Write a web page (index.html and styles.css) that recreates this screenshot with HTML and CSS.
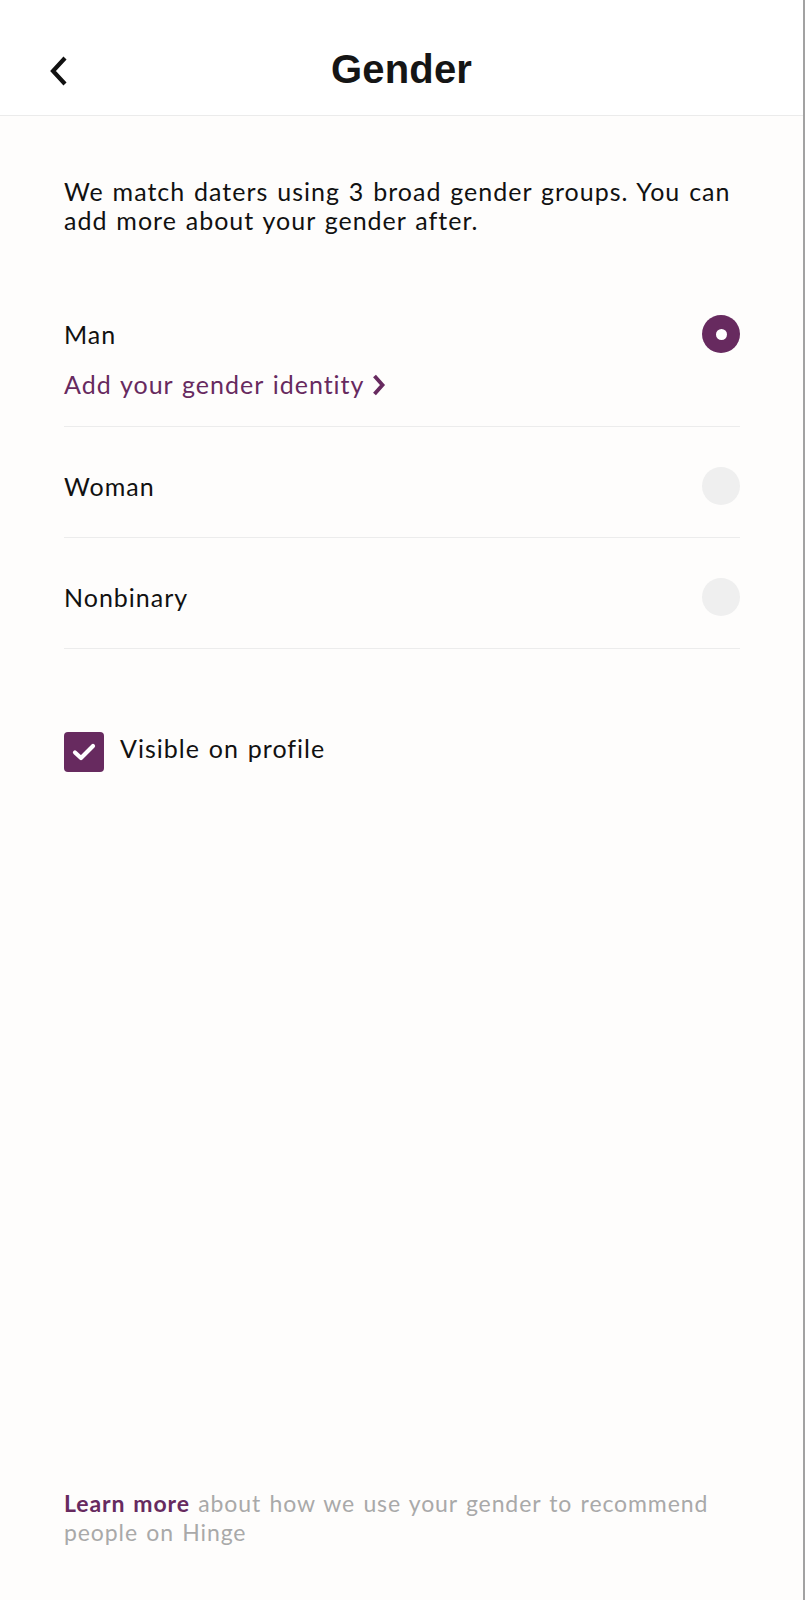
FILE: index.html
```html
<!DOCTYPE html>
<html lang="en">
<head>
<meta charset="utf-8">
<title>Gender</title>
<link rel="stylesheet" href="styles.css">
</head>
<body>
<div class="page">
  <header class="topbar">
    <button class="back" aria-label="Back">
      <svg width="20" height="30" viewBox="0 0 20 30"><polyline points="16,2 4,15 16,28" fill="none" stroke="#111" stroke-width="4.2" stroke-linejoin="miter" stroke-linecap="butt"/></svg>
    </button>
    <h1 class="title">Gender</h1>
  </header>
  <main class="content">
    <p class="intro">We match daters using 3 broad gender groups. You can add more about your gender after.</p>
    <ul class="options">
      <li class="option option-first">
        <div class="option-line">
          <span class="option-label">Man</span>
          <span class="radio radio-on"></span>
        </div>
        <a class="identity-link" href="#"><span>Add your gender identity</span>
          <svg class="link-chev" width="14" height="24" viewBox="0 0 14 24"><polyline points="2.5,3 10.5,12 2.5,21" fill="none" stroke="#672a5f" stroke-width="3.8"/></svg>
        </a>
      </li>
      <li class="option">
        <div class="option-line">
          <span class="option-label">Woman</span>
          <span class="radio"></span>
        </div>
      </li>
      <li class="option">
        <div class="option-line">
          <span class="option-label">Nonbinary</span>
          <span class="radio"></span>
        </div>
      </li>
    </ul>
    <label class="visible">
      <span class="checkbox">
        <svg width="26" height="22" viewBox="0 0 26 22"><polyline points="4,11.5 10,17 22,5" fill="none" stroke="#fff" stroke-width="4.2" stroke-linecap="round" stroke-linejoin="round"/></svg>
      </span>
      <span class="visible-label">Visible on profile</span>
    </label>
  </main>
  <footer class="footnote">
    <p class="footnote-text"><span class="learn">Learn more</span> about how we use your gender to recommend people on Hinge</p>
  </footer>
</div>
</body>
</html>
```

FILE: styles.css
```css
* { box-sizing: border-box; }
html, body { margin: 0; padding: 0; }
body {
  background: #fefdfc;
  font-family: "Lato", "Liberation Sans", sans-serif;
  color: #111;
}
.page {
  width: 805px;
  height: 1600px;
  border-right: 2px solid #a2a2a2;
  display: flex;
  flex-direction: column;
}
.topbar {
  height: 116px;
  background: #ffffff;
  border-bottom: 1px solid #ebebeb;
  display: flex;
  align-items: center;
  justify-content: center;
  position: relative;
  flex-shrink: 0;
}
.back {
  position: absolute;
  left: 49px;
  top: 56px;
  padding: 0;
  border: 0;
  background: none;
  width: 20px;
  height: 30px;
}
.back svg { display: block; }
.title {
  margin: 24px 0 0;
  font-family: "Liberation Sans", Arial, sans-serif;
  font-weight: 700;
  font-size: 40px;
  letter-spacing: 0.2px;
  color: #151515;
}
.content {
  padding: 61px 63px 0 64px;
  font-size: 25px;
  letter-spacing: 1px;
  word-spacing: 1.5px;
}
.intro {
  margin: 0;
  line-height: 29px;
  color: #111;
}
.options {
  list-style: none;
  margin: 40px 0 0;
  padding: 0;
}
.option {
  border-bottom: 1px solid #ececec;
  padding: 40px 0 32px;
}
.option-first {
  padding-bottom: 27px;
}
.option-line {
  display: flex;
  align-items: center;
  justify-content: space-between;
  height: 38px;
}
.option-label {
  line-height: 29px;
}
.radio {
  width: 38px;
  height: 38px;
  border-radius: 50%;
  background: #efefef;
  flex-shrink: 0;
}
.radio-on {
  background: #672a5f;
  display: flex;
  align-items: center;
  justify-content: center;
}
.radio-on::after {
  content: "";
  width: 11px;
  height: 11px;
  border-radius: 50%;
  background: #fff;
}
.identity-link {
  display: flex;
  align-items: center;
  gap: 8px;
  margin-top: 17px;
  line-height: 29px;
  color: #672a5f;
  text-decoration: none;
}
.link-chev { display: block; }
.visible {
  display: flex;
  align-items: center;
  gap: 16px;
  margin-top: 83px;
}
.checkbox {
  width: 40px;
  height: 40px;
  border-radius: 4px;
  background: #672a5f;
  display: flex;
  align-items: center;
  justify-content: center;
  flex-shrink: 0;
}
.checkbox svg { display: block; }
.visible-label {
  line-height: 29px;
  padding-bottom: 8px;
}
.footnote {
  margin-top: auto;
  padding: 0 60px 53px 64px;
}
.footnote-text {
  margin: 0;
  font-size: 23px;
  line-height: 29px;
  letter-spacing: 0.9px;
  word-spacing: 1.5px;
  color: #a9a9a9;
}
.learn {
  color: #672a5f;
  font-weight: 700;
}
```
